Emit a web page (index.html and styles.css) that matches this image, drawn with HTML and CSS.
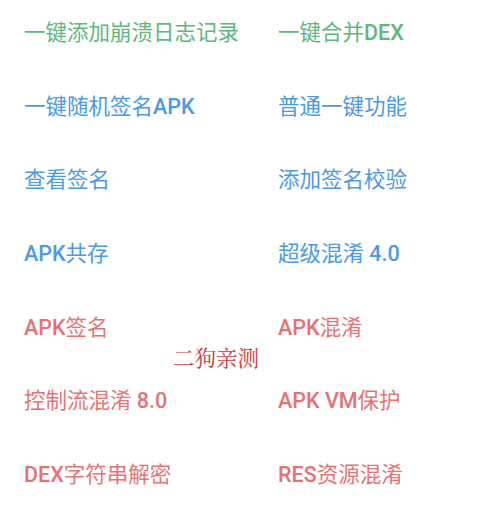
FILE: index.html
```html
<!DOCTYPE html>
<html lang="zh">
<head>
<meta charset="utf-8">
<link rel="stylesheet" href="styles.css">
</head>
<body>
<div class="page">
  <div class="grid">
    <div class="item green">一键添加崩溃日志记录</div>
    <div class="item green">一键合并<span class="lat">DEX</span></div>
    <div class="item blue">一键随机签名<span class="lat">APK</span></div>
    <div class="item blue">普通一键功能</div>
    <div class="item blue">查看签名</div>
    <div class="item blue">添加签名校验</div>
    <div class="item blue"><span class="lat">APK</span>共存</div>
    <div class="item blue">超级混淆<span class="lat"> 4.0</span></div>
    <div class="item red"><span class="lat">APK</span>签名</div>
    <div class="item red"><span class="lat">APK</span>混淆</div>
    <div class="item red">控制流混淆<span class="lat"> 8.0</span></div>
    <div class="item red"><span class="lat">APK VM</span>保护</div>
    <div class="item red"><span class="lat">DEX</span>字符串解密</div>
    <div class="item red"><span class="lat">RES</span>资源混淆</div>
  </div>
  <div class="mark">二狗亲测</div>
</div>
</body>
</html>
```
FILE: styles.css
```css
html, body {
  margin: 0;
  padding: 0;
  background: #ffffff;
}
.page {
  position: relative;
  width: 483px;
  height: 523px;
  overflow: hidden;
}
.grid {
  display: grid;
  grid-template-columns: 254px 1fr;
  grid-auto-rows: 73.67px;
  padding-left: 24px;
}
.item {
  font-family: "Noto Sans CJK SC", sans-serif;
  font-weight: 400;
  font-size: 21.5px;
  line-height: 24px;
  padding-top: 19px;
  white-space: nowrap;
}
.lat {
  font-family: Roboto, sans-serif;
  font-weight: 500;
}
.green { color: #5fb77a; }
.blue { color: #4a9ae6; }
.red { color: #e57373; }
.mark {
  position: absolute;
  left: 173px;
  top: 345px;
  font-family: "Noto Serif CJK SC", serif;
  font-size: 21.5px;
  line-height: 24px;
  color: #cc3a42;
}
```
